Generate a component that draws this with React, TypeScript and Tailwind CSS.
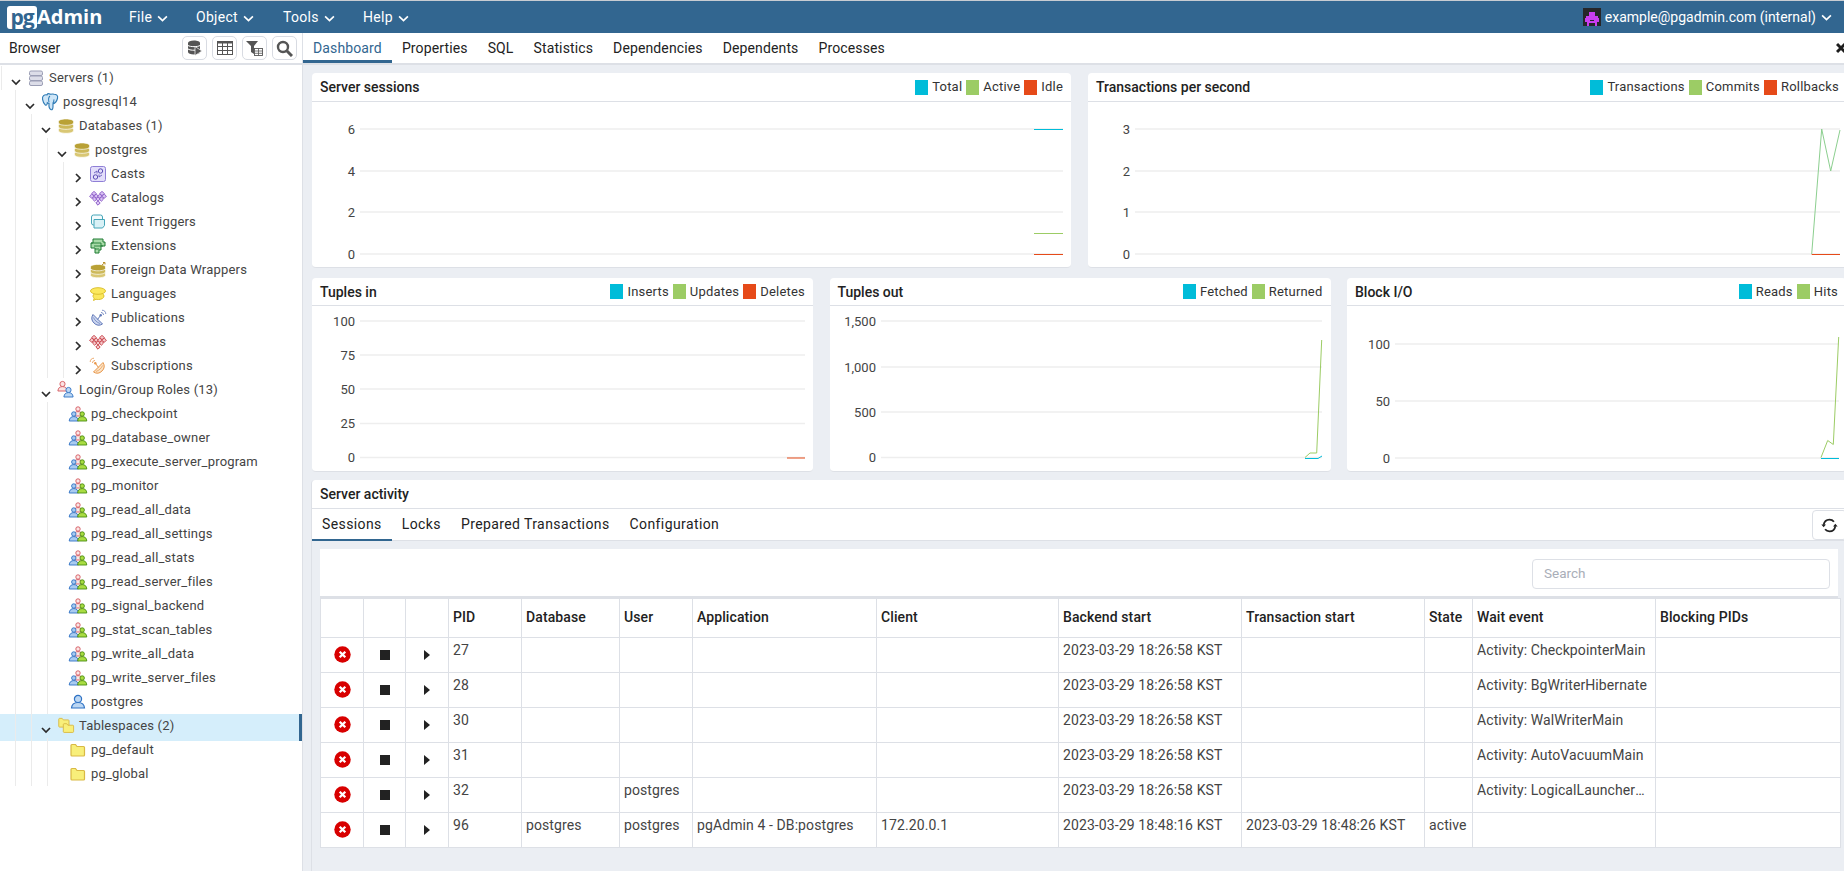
import { ReactNode } from "react";

const SESSION_ROLES = [
  "pg_checkpoint",
  "pg_database_owner",
  "pg_execute_server_program",
  "pg_monitor",
  "pg_read_all_data",
  "pg_read_all_settings",
  "pg_read_all_stats",
  "pg_read_server_files",
  "pg_signal_backend",
  "pg_stat_scan_tables",
  "pg_write_all_data",
  "pg_write_server_files",
];

const COLORS = { cyan: "#00bcd9", green: "#9ccc65", red: "#e64a19" };

const Svg = ({ children, w = 16, h = 16, vb = "0 0 16 16" }: { children: ReactNode; w?: number; h?: number; vb?: string }) => (
  <svg width={w} height={h} viewBox={vb} className="shrink-0 overflow-visible">
    {children}
  </svg>
);

const Person = ({ x, y, c, f, r = 2.6 }: { x: number; y: number; c: string; f: string; r?: number }) => (
  <g stroke={c} strokeWidth=".9" fill={f}>
    <circle cx={x} cy={y - 3.5} r={r} />
    <path d={`M${x - 4.6} ${y + 3.5}c.3-3 1.8-4.4 4.6-4.4s4.300 1.400 4.600 4.400z`} />
  </g>
);

const Diamonds = ({ c, f }: { c: string; f: string }) => {
  const pts = [
    [4, 3.5],
    [12, 3.5],
    [1.8, 6.2],
    [6.2, 6.2],
    [9.8, 6.2],
    [14.2, 6.2],
    [4.600, 9],
    [11.400, 9],
    [8, 9],
    [8, 13],
  ];
  return (
    <Svg>
      {pts.map(([x, y], i) => (
        <path key={i} d={`M${x} ${y - 2.200}l2.200 2.200-2.200 2.200-2.200-2.200z`} fill={f} stroke={c} strokeWidth="1" />
      ))}
    </Svg>
  );
};

const Disk = ({ y, c }: { y: number; c: string }) => (
  <path d={`M.5 ${y}c0-1.600 3.300-2.600 7.500-2.600s7.500 1 7.500 2.600v1.200c0 1.600-3.300 2.600-7.500 2.600s-7.500-1-7.500-2.600z`} fill={c} stroke="#fff" strokeWidth=".7" />
);

const DbIcon = () => (
  <Svg>
    <Disk y={11.500} c="#d9c774" />
    <Disk y={7.500} c="#cdb95a" />
    <Disk y={3.500} c="#b9a136" />
  </Svg>
);

const ServersIcon = () => (
  <Svg>
    {[1, 6, 11].map((y) => (
      <rect key={y} x="1.500" y={y} width="13" height="4.500" rx="1.500" fill="#dcdde8" stroke="#9b9eb5" />
    ))}
  </Svg>
);

const ElephantIcon = () => (
  <Svg w={17} h={17} vb=".5 1 15 14.500">
    <path d="M5 1.500c-2.500-.5-4.500 1-4 4 .3 2 1.400 4 2.500 5 1 .6 1.600-.6 1.700-2 .6.500 1 .6 1.500.6-.2 2 0 4.400 1.500 5.400 1.400.6 2-.8 2-2.500l0-2.500c1.800-.5 3.500-3 4-5 .6-2.500-1.200-3.500-3-3.500-1-.4-2-.4-3 0-1-.4-2-.6-2.700-.5z" fill="#cfe6f7" stroke="#2f7bb5" strokeWidth="1" />
    <path d="M7.500 2.500c-1.200 1-1.500 3-.8 5.600M11 5.500c.2 1.300-.2 2.500-1 3.500" fill="none" stroke="#2f7bb5" strokeWidth=".9" />
  </Svg>
);

const CastsIcon = () => (
  <Svg>
    <rect x=".5" y=".5" width="15" height="15" rx="2" fill="#e3defa" stroke="#8f7fd6" />
    <circle cx="10.500" cy="5" r="2.200" fill="none" stroke="#5b4cb5" />
    <circle cx="5.500" cy="11" r="2.200" fill="none" stroke="#5b4cb5" />
    <path d="M4 7l3-2v2.500M12 9l-3 2V8.500" fill="none" stroke="#5b4cb5" strokeWidth=".8" />
  </Svg>
);

const TriggerIcon = () => (
  <Svg>
    <rect x="1.500" y="1" width="11" height="10" rx="2" fill="#f3fbfd" stroke="#45a5b8" />
    <path d="M4 5.500V14h8.500l2-2.500V5.500z" fill="#d9f1f6" stroke="#45a5b8" strokeLinejoin="round" />
  </Svg>
);

const ExtensionIcon = () => (
  <Svg>
    <path d="M3 1h10v3h2v4h-4v4H9v3H5v-5H1V5h2z" fill="#a8dba8" stroke="#1f7a33" strokeWidth="1" />
    <path d="M1 5h10v3M4 8h9M5 11h4" fill="none" stroke="#1f7a33" strokeWidth=".9" />
  </Svg>
);

const FdwIcon = () => (
  <Svg>
    <Disk y={12} c="#d9c774" />
    <Disk y={8.500} c="#cdb95a" />
    <Disk y={5} c="#b9a136" />
    <path d="M12 3l3-2.500M13 .5h2V2.500" fill="none" stroke="#b9912e" strokeWidth="1" />
  </Svg>
);

const LanguageIcon = () => (
  <Svg>
    <path d="M3 10c0-2 2.500-3.500 5.500-3.500S14 8 14 10s-2.500 3.500-5.500 3.500c-1 0-1.800 0-2.500-.3l-2.500 1.300.7-2.400C3.300 11.500 3 10.800 3 10z" fill="#fbe85d" stroke="#dcc130" />
    <ellipse cx="8" cy="5" rx="7.500" ry="3.300" fill="#fbe85d" stroke="#dcc130" />
  </Svg>
);

const DishIcon = ({ c, f, flip }: { c: string; f: string; flip?: boolean }) => (
  <Svg>
    <g transform={flip ? "matrix(-1 0 0 1 16 0)" : undefined}>
      <path d="M3 4.500A6.900 6.900 0 0 0 12.500 14z" fill={f} stroke={c} />
      <path d="M3.500 7.500c1 2.500 3 4.800 6.500 6" fill="none" stroke={c} strokeWidth=".7" />
      <path d="M7.500 9.500l3-4" stroke={c} strokeWidth="1" />
      <circle cx="10.700" cy="5.300" r="1.200" fill={c} />
      <path d="M11 2.500c1.500 0 2.500 1 2.500 2.500M12 .2c2.300 0 3.800 1.500 3.800 3.800" fill="none" stroke={c} strokeWidth=".8" />
    </g>
  </Svg>
);

const GroupIcon = () => (
  <Svg w={18} h={15} vb="0 0 18 15">
    <Person x={9} y={5.500} c="#d4565c" f="#fbe6e6" r={2.200} />
    <Person x={4.800} y={10.500} c="#2f72c4" f="#a9cbf0" r={2.200} />
    <Person x={13.200} y={10.500} c="#4b8d12" f="#a9dc42" r={2.200} />
  </Svg>
);

const LoginIcon = () => (
  <Svg w={18} h={17} vb="0 0 18 17">
    <Person x={5.500} y={5.500} c="#d4565c" f="#fbe3e3" />
    <Person x={11.500} y={11.500} c="#2f72c4" f="#bcd7f3" />
  </Svg>
);

const UserIcon = () => (
  <Svg>
    <g stroke="#2f72c4" strokeWidth="1.200" fill="#bcd7f3">
      <circle cx="8" cy="5" r="3.600" />
      <path d="M1.500 14c.3-4 2.500-5.500 6.500-5.500s6.200 1.500 6.500 5.500z" />
    </g>
  </Svg>
);

const FolderShape = ({ dx = 0, dy = 0 }: { dx?: number; dy?: number }) => (
  <path
    transform={`translate(${dx} ${dy})`}
    d="M1 3.500c0-.5.300-1 1-1h3.500l1.500 2h6.500c.5 0 1 .3 1 1V13c0 .5-.4 1-1 1H2c-.6 0-1-.5-1-1z"
    fill="#f8ef7a"
    stroke="#d9b944"
    strokeWidth="1.200"
  />
);

const FolderIcon = () => (
  <Svg>
    <FolderShape />
  </Svg>
);

const TablespacesIcon = () => (
  <Svg>
    <g transform="scale(.76)">
      <FolderShape dx={0} dy={-2} />
      <FolderShape dx={6} dy={5} />
    </g>
  </Svg>
);

type TreeRow = {
  label: string;
  level: number;
  guides: number[];
  chevron?: "down" | "right";
  icon: ReactNode;
  selected?: boolean;
};

const schemaGuides = [1, 2, 3, 4];

const TREE: TreeRow[] = [
  { label: "Servers (1)", level: 0, guides: [0], chevron: "down", icon: <ServersIcon /> },
  { label: "posgresql14", level: 1, guides: [1], chevron: "down", icon: <ElephantIcon /> },
  { label: "Databases (1)", level: 2, guides: [1, 2], chevron: "down", icon: <DbIcon /> },
  { label: "postgres", level: 3, guides: [1, 2, 3], chevron: "down", icon: <DbIcon /> },
  { label: "Casts", level: 4, guides: schemaGuides, chevron: "right", icon: <CastsIcon /> },
  { label: "Catalogs", level: 4, guides: schemaGuides, chevron: "right", icon: <Diamonds c="#8e5fc9" f="#d9c3f3" /> },
  { label: "Event Triggers", level: 4, guides: schemaGuides, chevron: "right", icon: <TriggerIcon /> },
  { label: "Extensions", level: 4, guides: schemaGuides, chevron: "right", icon: <ExtensionIcon /> },
  { label: "Foreign Data Wrappers", level: 4, guides: schemaGuides, chevron: "right", icon: <FdwIcon /> },
  { label: "Languages", level: 4, guides: schemaGuides, chevron: "right", icon: <LanguageIcon /> },
  { label: "Publications", level: 4, guides: schemaGuides, chevron: "right", icon: <DishIcon c="#5f77b8" f="#ccd6f0" /> },
  { label: "Schemas", level: 4, guides: schemaGuides, chevron: "right", icon: <Diamonds c="#c9444c" f="#f5c9cb" /> },
  { label: "Subscriptions", level: 4, guides: schemaGuides, chevron: "right", icon: <DishIcon c="#e8964a" f="#fbe3c6" flip /> },
  { label: "Login/Group Roles (13)", level: 2, guides: [1, 2], chevron: "down", icon: <LoginIcon /> },
  ...SESSION_ROLES.map((label) => ({ label, level: 3, guides: [1, 2, 3], icon: <GroupIcon /> })),
  { label: "postgres", level: 3, guides: [1, 2, 3], icon: <UserIcon /> },
  { label: "Tablespaces (2)", level: 2, guides: [1, 2], chevron: "down", icon: <TablespacesIcon />, selected: true },
  { label: "pg_default", level: 3, guides: [1, 2, 3], icon: <FolderIcon /> },
  { label: "pg_global", level: 3, guides: [1, 2, 3], icon: <FolderIcon /> },
];

const INDENT = ["w-[8px]", "w-[22px]", "w-[38px]", "w-[54px]", "w-[70px]"];
const GUIDE = ["left-[1px]", "left-[15px]", "left-[31px]", "left-[47px]", "left-[63px]"];

const Chevron = ({ dir }: { dir: "down" | "right" }) => (
  <span className="flex w-4 shrink-0 justify-center pt-[7px]">
    <svg width="10" height="10" viewBox="0 0 10 10" fill="none" stroke="#2b2b2b" strokeWidth="1.700">
      {dir === "down" ? <path d="M1 3l4 4 4-4" /> : <path d="M3 1l4 4-4 4" />}
    </svg>
  </span>
);

const Tree = () => (
  <div className="pt-px">
    {TREE.map((row, i) => (
      <div key={i} className="relative flex h-6 items-center text-[13px] tracking-[0.2px] text-[#444]">
        {row.selected && <div className="absolute inset-x-0 top-0 -bottom-[3px] border-r-[3px] border-[#326690] bg-[#d5eefb]" />}
        {row.guides.map((g) => (
          <span key={g} className={`absolute top-0 bottom-0 w-px bg-[#ebebeb] ${GUIDE[g]}`} />
        ))}
        <span className={`relative shrink-0 ${INDENT[row.level]}`} />
        {row.chevron ? (
          <span className="relative">
            <Chevron dir={row.chevron} />
          </span>
        ) : (
          <span className="w-4 shrink-0" />
        )}
        <span className={`relative mr-[5px] flex w-4 shrink-0 justify-center ${row.chevron ? "ml-1" : ""}`}>{row.icon}</span>
        <span className="relative whitespace-nowrap">{row.label}</span>
      </div>
    ))}
  </div>
);

const ToolButton = ({ children }: { children: ReactNode }) => (
  <button className="flex h-[24px] w-[25px] items-center justify-center rounded-[5px] border border-[#d8dbe2] bg-white">{children}</button>
);

const BrowserPanel = () => (
  <aside className="h-full w-[303px] shrink-0 border-r border-[#dde0e6] bg-white">
    <div className="flex h-[32px] items-center justify-between border-b-2 border-[#dde0e6] pl-[9px] pr-[5px]">
      <span className="text-sm text-[#222]">Browser</span>
      <div className="flex gap-[5px]">
        <ToolButton>
          <svg width="16" height="16" viewBox="0 0 16 16">
            <path d="M1 3c0-1.500 2.500-2.500 6-2.500s6 1 6 2.500v9c0 1.500-2.500 2.500-6 2.500S1 13.500 1 12z" fill="#555" />
            <path d="M1 5.500c2 1.500 10 1.500 12 0M1 9c2 1.500 7 1.500 9 .8" stroke="#fff" strokeWidth="1" fill="none" />
            <path d="M8 6.500l7 4.500-7 4.500z" fill="#555" stroke="#fff" strokeWidth=".7" />
          </svg>
        </ToolButton>
        <ToolButton>
          <svg width="16" height="14" viewBox="0 0 16 14" fill="none" stroke="#555" strokeWidth="1">
            <rect x=".5" y=".5" width="15" height="13" fill="#fff" />
            <path d="M.5 1.500h15" strokeWidth="2" />
            <path d="M.5 5.500h15M.5 9.500h15M5.500 1v13M10.500 1v13" />
          </svg>
        </ToolButton>
        <ToolButton>
          <svg width="17" height="15" viewBox="0 0 17 15">
            <path d="M0 0h12L8 5v8L5 11V5z" fill="#555" />
            <rect x="8.500" y="7.500" width="8" height="7" fill="#fff" stroke="#555" strokeWidth=".9" />
            <path d="M8.500 10h8M8.500 12.300h8M12.500 7.500v7" stroke="#555" strokeWidth=".8" />
          </svg>
        </ToolButton>
        <ToolButton>
          <svg width="17" height="17" viewBox="0 0 17 17" fill="none" stroke="#555" strokeWidth="2.400">
            <circle cx="7" cy="7" r="5" />
            <path d="M11 11l5 5" strokeWidth="3" />
          </svg>
        </ToolButton>
      </div>
    </div>
    <Tree />
  </aside>
);

const NavChevron = () => (
  <svg width="11" height="11" viewBox="0 0 10 10" fill="none" stroke="#fff" strokeWidth="1.500" className="mt-[3px]">
    <path d="M1 3l4 4 4-4" />
  </svg>
);

const NAV = [
  { label: "File", cls: "w-[67px]" },
  { label: "Object", cls: "w-[87px]" },
  { label: "Tools", cls: "w-[80px]" },
  { label: "Help", cls: "w-[70px]" },
];

const Navbar = () => (
  <header className="flex h-[33px] shrink-0 items-center border-t border-[#c8ccd2] bg-[#326690] text-sm text-white">
    <div className="ml-[7px] flex h-[23px] w-[30px] items-center justify-center rounded-[3px] bg-white font-['Open_Sans'] text-[21px] font-bold leading-none tracking-[-1px] text-[#326690]">
      pg
    </div>
    <span className="mr-[26px] w-[66px] font-['Open_Sans'] text-[20px] font-bold leading-none">Admin</span>
    {NAV.map((item) => (
      <div key={item.label} className={`flex items-center gap-[5px] ${item.cls}`}>
        <span className="tracking-[0.3px]">{item.label}</span>
        <NavChevron />
      </div>
    ))}
    <div className="ml-auto mr-[12px] flex items-center">
      <svg width="18" height="18" viewBox="0 0 9 9" className="mr-1" shapeRendering="crispEdges">
        <rect width="9" height="9" fill="#26262a" />
        <path d="M3 2h3v2h1.500v1H8v2H7v2H6V7.500H3V9H2V7H1V5h.5V4H3z" fill="#c93ef0" />
        <path d="M3.500 6h2v.5h-2z" fill="#26262a" />
      </svg>
      <span>example@pgadmin.com (internal)</span>
      <svg width="11" height="11" viewBox="0 0 10 10" fill="none" stroke="#fff" strokeWidth="1.500" className="ml-[5px]">
        <path d="M1 3l4 4 4-4" />
      </svg>
    </div>
  </header>
);

const TABS = ["Dashboard", "Properties", "SQL", "Statistics", "Dependencies", "Dependents", "Processes"];

const MainTabs = () => (
  <div className="relative flex h-[32px] shrink-0 border-b-2 border-[#dde0e6] bg-white text-sm tracking-[0.13px] text-[#222]">
    {TABS.map((t, i) => (
      <div key={t} className={`-mb-[1px] flex h-[30px] items-center px-[10px] ${i === 0 ? "border-b-[3px] border-[#326690] pt-[3px] text-[#326690]" : ""}`}>
        {t}
      </div>
    ))}
    <span className="absolute left-[1533px] top-[9px]">
      <svg width="12" height="12" viewBox="0 0 12 12" stroke="#1d1d1d" strokeWidth="3">
        <path d="M1 2l8 8M9 2l-8 8" />
      </svg>
    </span>
  </div>
);

type Legend = { label: string; color: string };

const CardHeader = ({ title, legend, short }: { title: string; legend: Legend[]; short?: boolean }) => (
  <div className={`flex items-center justify-between border-b border-[#dde0e6] pl-2 pr-2 ${short ? "h-[28px]" : "h-[29px]"}`}>
    <span className="text-sm font-medium text-[#222]">{title}</span>
    <div className="flex items-center gap-1 text-[13px] tracking-[0.2px] text-[#333]">
      {legend.map((l) => (
        <div key={l.label} className="flex items-center gap-1">
          <span className="h-[15px] w-[13px]" style={{ backgroundColor: l.color }} />
          {l.label}
        </div>
      ))}
    </div>
  </div>
);

type Series = { color: string; points: string };

type ChartProps = {
  x: number;
  y: number;
  w: number;
  h: number;
  gridFrom: number;
  gridTo: number;
  ticks: [string, number][];
  series: Series[];
};

// chart coordinates below are the page's own pixels, the viewBox shifts them into the card
const Chart = ({ x, y, w, h, gridFrom, gridTo, ticks, series }: ChartProps) => (
  <svg width={w} height={h} viewBox={`${x} ${y} ${w} ${h}`} className="block font-['Roboto',sans-serif]">
    {ticks.map(([label, ty]) => (
      <g key={label}>
        <line x1={gridFrom} x2={gridTo} y1={ty} y2={ty} stroke="#eeeeee" strokeWidth="1.500" />
        <text x={gridFrom - 5} y={ty + 4.500} textAnchor="end" fontSize="13" fill="#444">
          {label}
        </text>
      </g>
    ))}
    {series.map((s, i) => (
      <polyline key={i} points={s.points} fill="none" stroke={s.color} strokeWidth="1" />
    ))}
  </svg>
);

const Card = ({ title, legend, chart, short }: { title: string; legend: Legend[]; chart: ChartProps; short?: boolean }) => (
  <div className={`overflow-hidden rounded-[4px] border-b border-[#dde0e6] bg-white ${short ? "h-[194px]" : "h-[195px]"}`}>
    <CardHeader title={title} legend={legend} short={short} />
    <Chart {...chart} />
  </div>
);

const ROWS = [
  { pid: "27", user: "", db: "", app: "", client: "", tx: "", state: "", wait: "Activity: CheckpointerMain" },
  { pid: "28", user: "", db: "", app: "", client: "", tx: "", state: "", wait: "Activity: BgWriterHibernate" },
  { pid: "30", user: "", db: "", app: "", client: "", tx: "", state: "", wait: "Activity: WalWriterMain" },
  { pid: "31", user: "", db: "", app: "", client: "", tx: "", state: "", wait: "Activity: AutoVacuumMain" },
  { pid: "32", user: "postgres", db: "", app: "", client: "", tx: "", state: "", wait: "Activity: LogicalLauncherMain" },
  {
    pid: "96",
    user: "postgres",
    db: "postgres",
    app: "pgAdmin 4 - DB:postgres",
    client: "172.20.0.1",
    tx: "2023-03-29 18:48:26 KST",
    state: "active",
    wait: "",
  },
];

const COLS = ["w-[43px]", "w-[42px]", "w-[43px]", "w-[73px]", "w-[98px]", "w-[73px]", "w-[184px]", "w-[182px]", "w-[183px]", "w-[183px]", "w-[48px]", "w-[183px]", "w-[185px]"];
const HEAD = ["", "", "", "PID", "Database", "User", "Application", "Client", "Backend start", "Transaction start", "State", "Wait event", "Blocking PIDs"];

const Td = ({ children }: { children?: ReactNode }) => (
  <td className="truncate border border-[#dde0e6] px-[4px] pb-[12px] pt-[3px] align-top leading-[18px]">{children}</td>
);

const IconTd = ({ children }: { children: ReactNode }) => (
  <td className="border border-[#dde0e6] p-0 pb-px align-middle">
    <div className="flex items-center justify-center">{children}</div>
  </td>
);

const SessionsTable = () => (
  <table className="w-[1520px] table-fixed border-collapse bg-white text-sm tracking-[0.1px] text-[#444]">
    <colgroup>
      {COLS.map((c, i) => (
        <col key={i} className={c} />
      ))}
    </colgroup>
    <thead>
      <tr className="h-[39px]">
        {HEAD.map((h, i) => (
          <th key={i} className="border border-[#dde0e6] px-[4px] pb-[3px] text-left text-sm font-medium text-[#222]">
            {h}
          </th>
        ))}
      </tr>
    </thead>
    <tbody>
      {ROWS.map((r) => (
        <tr key={r.pid} className="h-[35px]">
          <IconTd>
            <svg width="17" height="17" viewBox="0 0 17 17">
              <circle cx="8.500" cy="8.500" r="8.200" fill="#d80000" />
              <path d="M5.700 5.700l5.600 5.600M11.300 5.700l-5.600 5.600" stroke="#fff" strokeWidth="2.300" />
            </svg>
          </IconTd>
          <IconTd>
            <span className="h-[10px] w-[10px] bg-[#222]" />
          </IconTd>
          <IconTd>
            <svg width="6" height="10" viewBox="0 0 6 10">
              <path d="M0 0l6 5-6 5z" fill="#222" />
            </svg>
          </IconTd>
          <Td>{r.pid}</Td>
          <Td>{r.db}</Td>
          <Td>{r.user}</Td>
          <Td>{r.app}</Td>
          <Td>{r.client}</Td>
          <Td>2023-03-29 {r.pid === "96" ? "18:48:16" : "18:26:58"} KST</Td>
          <Td>{r.tx}</Td>
          <Td>{r.state}</Td>
          <Td>{r.wait}</Td>
          <Td />
        </tr>
      ))}
    </tbody>
  </table>
);

const ACTIVITY_TABS = ["Sessions", "Locks", "Prepared Transactions", "Configuration"];

const ServerActivity = () => (
  <div className="mt-2 -ml-px flex min-h-0 flex-1 flex-col rounded-t-[4px] border-l border-[#dde0e6] bg-white">
    <div className="flex h-[29px] shrink-0 items-center border-b border-[#dde0e6] pl-2 text-sm font-medium text-[#222]">Server activity</div>
    <div className="flex h-[32px] shrink-0 border-b border-[#dde0e6] text-sm tracking-[0.4px] text-[#222]">
      {ACTIVITY_TABS.map((t, i) => (
        <div key={t} className={`flex h-[32px] items-center border-b-2 px-[10px] ${i === 0 ? "border-[#326690]" : "border-transparent"}`}>
          {t}
        </div>
      ))}
      <div className="ml-auto mr-[16px] mt-px flex h-[30px] w-[35px] items-center justify-center rounded-[4px] border border-[#dde0e6] bg-white">
        <svg width="17" height="15" viewBox="0 0 16 14" fill="none" stroke="#222" strokeWidth="1.700">
          <path d="M2.500 6.500C3 3.500 5.200 1.500 8 1.500c1.700 0 3.200.8 4.200 2" />
          <path d="M13.500 7.500C13 10.500 10.800 12.500 8 12.500c-1.700 0-3.200-.8-4.200-2" />
          <path d="M.3 6h4.400L2.500 8.600zM11.300 8h4.400l-2.200-2.600z" fill="#222" stroke="none" />
        </svg>
      </div>
    </div>
    <div className="min-h-0 flex-1 bg-[#ebeef3] pl-2 pt-[8px]">
      <div className="flex h-[49px] w-[1518px] items-center justify-end border-b-2 border-[#dde0e6] bg-white pr-[8px] pt-[2px]">
        <div className="flex h-[30px] w-[298px] items-center rounded-[4px] border border-[#dde0e6] pl-[11px] text-[13.500px] text-[#a9aeb8]">Search</div>
      </div>
      <SessionsTable />
    </div>
  </div>
);

const sessions: ChartProps = {
  x: 312,
  y: 102,
  w: 759,
  h: 166,
  gridFrom: 360,
  gridTo: 1063,
  ticks: [
    ["6", 129],
    ["4", 171],
    ["2", 212],
    ["0", 254],
  ],
  series: [
    { color: COLORS.cyan, points: "1034,129.500 1063,129.500" },
    { color: COLORS.green, points: "1034,233.500 1063,233.500" },
    { color: COLORS.red, points: "1034,254.500 1063,254.500" },
  ],
};

const transactions: ChartProps = {
  x: 1088,
  y: 102,
  w: 759,
  h: 166,
  gridFrom: 1135,
  gridTo: 1840,
  ticks: [
    ["3", 129],
    ["2", 171],
    ["1", 212],
    ["0", 254],
  ],
  series: [
    { color: "#8ccf8f", points: "1811.700,254 1821.700,129 1830.700,171 1840,130" },
    { color: COLORS.red, points: "1811.700,254.500 1840,254.500" },
  ],
};

const tuplesIn: ChartProps = {
  x: 312,
  y: 306,
  w: 501,
  h: 166,
  gridFrom: 360,
  gridTo: 805,
  ticks: [
    ["100", 321],
    ["75", 355],
    ["50", 389],
    ["25", 423.500],
    ["0", 457.500],
  ],
  series: [{ color: COLORS.red, points: "787,458 805,458" }],
};

const tuplesOut: ChartProps = {
  x: 830,
  y: 306,
  w: 501,
  h: 166,
  gridFrom: 881,
  gridTo: 1322,
  ticks: [
    ["1,500", 321],
    ["1,000", 367],
    ["500", 412],
    ["0", 457.500],
  ],
  series: [
    { color: COLORS.green, points: "1305,457.500 1310,453 1316.700,453 1321.700,340" },
    { color: COLORS.cyan, points: "1305,458.500 1318,458.500 1322,456" },
  ],
};

const blockIO: ChartProps = {
  x: 1347,
  y: 306,
  w: 499,
  h: 166,
  gridFrom: 1395,
  gridTo: 1839,
  ticks: [
    ["100", 344],
    ["50", 401],
    ["0", 458],
  ],
  series: [
    { color: COLORS.green, points: "1821,457.500 1827.700,440.500 1833.300,444.500 1838.700,337" },
    { color: COLORS.cyan, points: "1821,458.500 1839,458.500" },
  ],
};

const Dashboard = () => (
  <div className="flex min-h-0 w-[1560px] flex-1 flex-col pl-[9px] pt-2">
    <div className="grid grid-cols-[759px_759px] gap-x-[17px]">
      <Card
        title="Server sessions"
        legend={[
          { label: "Total", color: COLORS.cyan },
          { label: "Active", color: COLORS.green },
          { label: "Idle", color: COLORS.red },
        ]}
        chart={sessions}
      />
      <Card
        title="Transactions per second"
        legend={[
          { label: "Transactions", color: COLORS.cyan },
          { label: "Commits", color: COLORS.green },
          { label: "Rollbacks", color: COLORS.red },
        ]}
        chart={transactions}
      />
    </div>
    <div className="mt-[10px] grid grid-cols-[501px_501px_499px] gap-x-[16.500px]">
      <Card
        short
        title="Tuples in"
        legend={[
          { label: "Inserts", color: COLORS.cyan },
          { label: "Updates", color: COLORS.green },
          { label: "Deletes", color: COLORS.red },
        ]}
        chart={tuplesIn}
      />
      <Card
        short
        title="Tuples out"
        legend={[
          { label: "Fetched", color: COLORS.cyan },
          { label: "Returned", color: COLORS.green },
        ]}
        chart={tuplesOut}
      />
      <Card
        short
        title="Block I/O"
        legend={[
          { label: "Reads", color: COLORS.cyan },
          { label: "Hits", color: COLORS.green },
        ]}
        chart={blockIO}
      />
    </div>
    <ServerActivity />
  </div>
);

export default function App() {
  return (
    <div className="flex h-[871px] w-[1844px] flex-col overflow-hidden bg-white font-['Roboto',sans-serif]">
      <Navbar />
      <div className="flex min-h-0 flex-1">
        <BrowserPanel />
        <main className="flex min-w-0 flex-1 flex-col overflow-hidden bg-[#ebeef3]">
          <MainTabs />
          <Dashboard />
        </main>
      </div>
    </div>
  );
}
